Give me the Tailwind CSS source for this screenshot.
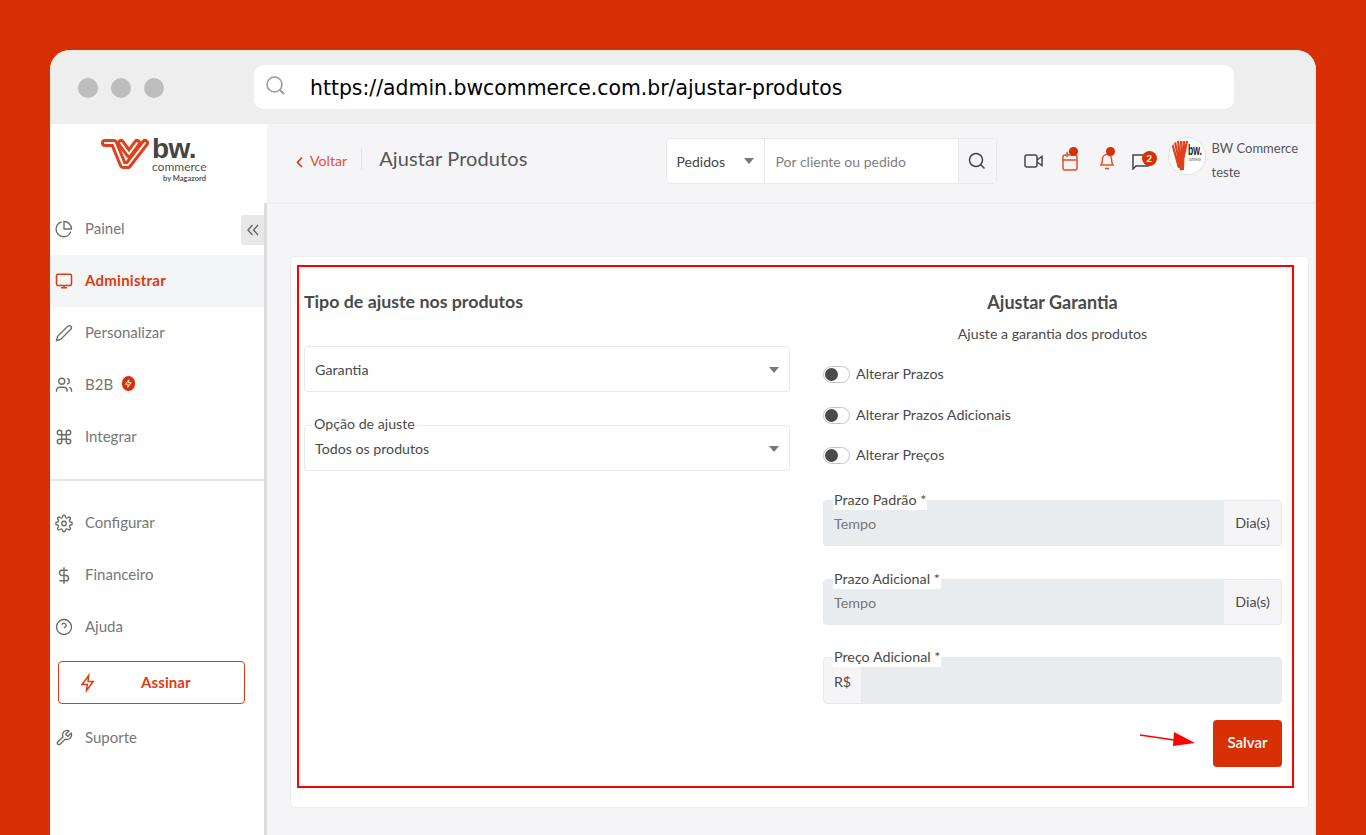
<!DOCTYPE html>
<html lang="pt-BR"><head><meta charset="utf-8"><script src="https://cdn.jsdelivr.net/npm/@tailwindcss/browser@4"></script><title>Ajustar Produtos</title></head>
<body class="m-0 h-[835px] w-[1366px] overflow-hidden bg-[#d82f05] pt-[50px] px-[50px] font-['Lato',sans-serif] text-[15px] text-[#4a4a4a]">
<div class="h-[785px] w-[1266px] overflow-hidden rounded-t-[20px] bg-white">
  <!-- browser bar -->
  <div class="flex h-[74px] items-center bg-[#eeeeee] pl-[28px]">
    <div class="flex gap-[13px] pt-[1px]"><span class="size-[20px] rounded-full bg-[#bdbdbd]"></span><span class="size-[20px] rounded-full bg-[#bdbdbd]"></span><span class="size-[20px] rounded-full bg-[#bdbdbd]"></span></div>
    <div class="ml-[90px] flex h-[44px] w-[980px] items-center rounded-[10px] bg-white pl-[11px]">
      <svg width="22" height="22" viewBox="0 0 22 22" fill="none" stroke="#9a9a9a" class="-mt-[3px]"><circle cx="9.500" cy="9.500" r="7.500" stroke-width="1.600"/><path d="M15 15l4 4" stroke-width="2"/></svg>
      <span class="ml-[23px] pt-[3px] font-['DejaVu_Sans',sans-serif] text-[20.400px] text-black">https://admin.bwcommerce.com.br/ajustar-produtos</span>
    </div>
  </div>
  <div class="flex h-[711px]">
    <!-- sidebar -->
    <aside class="relative w-[217px] shrink-0 bg-white">
      <div class="flex h-[79px] items-start pl-[50px] pt-[13px]">
        <svg width="50" height="36" viewBox="0 0 50 36" fill="none" stroke-linejoin="round" stroke-linecap="round"><g stroke="#e0401c" stroke-width="8"><path d="M5 6H14L23 28H28L45 6"/><path d="M21 6L29 17L37 6"/></g><g stroke="#fff" stroke-width="2"><path d="M5 6H14L23 28H28L45 6"/><path d="M21 6L29 17L37 6"/></g></svg>
        <div class="ml-[2px] flex w-[54px] flex-col leading-none">
          <span class="font-['Liberation_Sans',sans-serif] text-[28px] font-bold leading-[24px] tracking-[-.6px] text-[#444]">bw.</span>
          <span class="text-[12px] leading-[11px] text-[#555]">commerce</span>
          <span class="mt-[2px] self-end whitespace-nowrap text-[7.500px] leading-[9px] font-bold text-[#555]">by Magazord</span>
        </div>
      </div>
      <nav>
        <a class="flex h-[52px] items-center pl-[5px] text-[#777]"><svg class="w-[18px]" height="20" viewBox="0 0 24 24" fill="none" stroke="#6b6b6b" stroke-width="1.800"><path d="M21 15.500A10 10 0 1 1 9 2.600"/><path d="M22 12A10 10 0 0 0 12 2v10z"/></svg><span class="-mt-[2px] ml-[12px]">Painel</span></a>
        <a class="flex h-[52px] items-center bg-[#f4f5f7] pl-[5px] font-bold text-[#dd3c12]"><svg class="w-[18px]" height="20" viewBox="0 0 24 24" fill="none" stroke="#dd3c12" stroke-width="2"><rect x="2" y="3" width="20" height="15" rx="2"/><path d="M12 18v3M8 21h8"/></svg><span class="-mt-[2px] ml-[12px] tracking-[.25px]">Administrar</span></a>
        <a class="flex h-[52px] items-center pl-[5px] text-[#777]"><svg class="w-[18px]" height="20" viewBox="0 0 24 24" fill="none" stroke="#6b6b6b" stroke-width="1.800"><path d="M17 3a2.800 2.800 0 0 1 4 4L7.500 20.500 2 22l1.500-5.500z"/></svg><span class="-mt-[2px] ml-[12px]">Personalizar</span></a>
        <a class="flex h-[52px] items-center pl-[5px] text-[#777]"><svg class="w-[18px]" height="20" viewBox="0 0 24 24" fill="none" stroke="#6b6b6b" stroke-width="1.800"><path d="M16 21v-2a4 4 0 0 0-4-4H6a4 4 0 0 0-4 4v2"/><circle cx="9" cy="7" r="4"/><path d="M22 21v-2a4 4 0 0 0-3-3.900M16 3.100a4 4 0 0 1 0 7.800"/></svg><span class="-mt-[2px] ml-[12px]">B2B</span><span class="relative -top-[2px] ml-[9px] flex h-[15px] w-[13px] items-center justify-center rounded-full bg-[#d82f05]"><svg width="9" height="9" viewBox="0 0 24 24" fill="none" stroke="#fff" stroke-width="2.500"><path d="M13 2L4 14h7l-1 8 9-12h-7z"/></svg></span></a>
        <a class="flex h-[52px] items-center pl-[5px] text-[#777]"><svg class="w-[18px]" height="20" viewBox="0 0 24 24" fill="none" stroke="#6b6b6b" stroke-width="1.800"><path d="M18 3a3 3 0 0 0-3 3v12a3 3 0 1 0 3-3H6a3 3 0 1 0 3 3V6a3 3 0 1 0-3 3h12a3 3 0 0 0 0-6"/></svg><span class="-mt-[2px] ml-[12px]">Integrar</span></a>
      </nav>
      <div class="mt-[16px] h-[2px] w-[214px] bg-[#e6e6e6]"></div>
      <nav class="mt-[16px]">
        <a class="flex h-[52px] items-center pl-[5px] text-[#777]"><svg class="w-[18px]" height="21" viewBox="0 0 24 24" fill="none" stroke="#6b6b6b" stroke-width="1.800"><circle cx="12" cy="12" r="3"/><path d="M19.400 15a1.700 1.700 0 0 0 .3 1.800l.1.1a2 2 0 1 1-2.800 2.800l-.1-.1a1.700 1.700 0 0 0-2.900 1.200V21a2 2 0 0 1-4 0v-.1a1.700 1.700 0 0 0-2.900-1.200l-.1.1a2 2 0 1 1-2.800-2.800l.1-.1a1.700 1.700 0 0 0-1.200-2.900H3a2 2 0 0 1 0-4h.1a1.700 1.700 0 0 0 1.200-2.900l-.1-.1a2 2 0 1 1 2.800-2.800l.1.1a1.700 1.700 0 0 0 2.900-1.200V3a2 2 0 0 1 4 0v.1a1.700 1.700 0 0 0 2.900 1.200l.1-.1a2 2 0 1 1 2.800 2.800l-.1.1a1.700 1.700 0 0 0 1.200 2.900h.1a2 2 0 0 1 0 4h-.1a1.700 1.700 0 0 0-1.500 1z"/></svg><span class="-mt-[2px] ml-[12px]">Configurar</span></a>
        <a class="flex h-[52px] items-center pl-[5px] text-[#777]"><svg class="w-[18px]" height="21" viewBox="0 0 24 24" fill="none" stroke="#6b6b6b" stroke-width="1.900"><path d="M12 1v22M17 5H9.500a3.500 3.500 0 0 0 0 7h5a3.500 3.500 0 0 1 0 7H6"/></svg><span class="-mt-[2px] ml-[12px]">Financeiro</span></a>
        <a class="flex h-[52px] items-center pl-[5px] text-[#777]"><svg class="w-[18px]" height="20" viewBox="0 0 24 24" fill="none" stroke="#6b6b6b" stroke-width="1.800"><circle cx="12" cy="12" r="10"/><path d="M9.100 9a3 3 0 0 1 5.800 1c0 2-3 3-3 3M12 17h.01"/></svg><span class="-mt-[2px] ml-[12px]">Ajuda</span></a>
      </nav>
      <a class="relative ml-[8px] mt-[8px] flex h-[43px] w-[187px] items-center rounded-[4px] border border-[#dd3c12] font-bold text-[#dd3c12]">
        <svg class="ml-[20px]" width="18" height="22" viewBox="0 0 24 24" fill="none" stroke="#dd3c12" stroke-width="2"><path d="M13 2L4 14h7l-1 8 9-12h-7z"/></svg>
        <span class="ml-[44px] tracking-[.1px]">Assinar</span>
      </a>
      <a class="mt-[8px] flex h-[52px] items-center pl-[5px] text-[#777]"><svg class="w-[18px]" height="20" viewBox="0 0 24 24" fill="none" stroke="#6b6b6b" stroke-width="1.800"><path d="M14.700 6.300a1 1 0 0 0 0 1.400l1.600 1.600a1 1 0 0 0 1.400 0l3.800-3.800a6 6 0 0 1-7.900 7.900l-6.900 6.900a2.100 2.100 0 0 1-3-3l6.900-6.900a6 6 0 0 1 7.900-7.900z"/></svg><span class="-mt-[2px] ml-[12px]">Suporte</span></a>
      <button class="absolute left-[191px] top-[91px] flex h-[30px] w-[23px] items-center justify-center rounded-l-[3px] bg-[#e8e8e8]"><svg width="14" height="14" viewBox="0 0 14 14" fill="none" stroke="#666" stroke-width="1.400"><path d="M6.500 2L2 7l4.500 5M12 2L7.500 7l4.500 5"/></svg></button>
      <div class="absolute left-[214px] top-[79px] h-[632px] w-[3px] bg-[#dedede]"></div>
    </aside>
    <!-- main -->
    <main class="flex-1 bg-[#f5f5f8]">
      <header class="flex h-[80px] items-start border-b-2 border-[#eeeff1] pl-[28px]">
        <div class="mt-[26px] flex h-[21px] items-center text-[#e2502c]"><svg width="9" height="12" viewBox="0 0 9 12" fill="none" stroke="#dd3c12" stroke-width="1.700" class="mt-[2px]"><path d="M7 1.500L2.500 6.500 7 11"/></svg><span class="ml-[6px] text-[14.200px]">Voltar</span></div>
        <span class="ml-[14px] mt-[24px] h-[22px] border-l border-[#e4e4e4]"></span>
        <h1 class="ml-[17px] mt-[19px] text-[20px] font-normal leading-[30px] tracking-[.1px] text-[#555]">Ajustar Produtos</h1>
        <div class="ml-[138px] mt-[14px] flex h-[46px] w-[331px] rounded-[4px] border border-[#e8e9ec] bg-white text-[14px]">
          <div class="flex w-[98px] items-center justify-between border-r border-[#e8e9ec] pl-[10px] pr-[10px] text-[#444]">Pedidos<i class="h-0 w-0 border-x-[5px] border-t-[6px] border-x-transparent border-t-[#777]"></i></div>
          <div class="flex flex-1 items-center pl-[11px] text-[#808080]">Por cliente ou pedido</div>
          <div class="flex w-[38px] items-center justify-center border-l border-[#e8e9ec] bg-[#f5f5f8]"><svg width="18" height="18" viewBox="0 0 18 18" fill="none" stroke="#444" stroke-width="1.500"><circle cx="8" cy="8" r="6.500"/><path d="M12.800 12.800L16.500 16.500"/></svg></div>
        </div>
        <div class="relative ml-[27px] mt-[28px] flex h-[18px] items-center">
          <svg width="19" height="16" viewBox="0 0 19 16" fill="none" stroke="#444" stroke-width="1.500"><rect x="1" y="2" width="12" height="12" rx="2"/><path d="M13 7l5-3.500v9L13 9"/></svg>
          <span class="relative ml-[18px]"><svg width="18" height="24" viewBox="0 0 18 24" fill="none" stroke="#e2502c" stroke-width="1.500" class="-mt-[2px]"><rect x="2" y="7" width="14" height="15" rx="2"/><path d="M2 12h14M6 4v5"/></svg><i class="absolute -top-[3px] left-[8px] size-[9px] rounded-full bg-[#d82f05]"></i></span>
          <span class="relative ml-[19px]"><svg width="18" height="24" viewBox="0 0 18 24" fill="none" stroke="#e2502c" stroke-width="1.500" class="-mt-[2px]"><path d="M3 17c1.500-2 1.500-4 1.500-6a4.500 4.500 0 0 1 9 0c0 2 0 4 1.500 6zM7 20.500h4"/></svg><i class="absolute -top-[3px] left-[8px] size-[9px] rounded-full bg-[#d82f05]"></i></span>
          <span class="relative ml-[16px]"><svg width="17" height="17" viewBox="0 0 17 17" fill="none" stroke="#444" stroke-width="1.500"><path d="M1 2h15v11H4l-3 3z"/></svg><i class="absolute -top-[2px] left-[10px] flex size-[15px] items-center justify-center rounded-full bg-[#d82f05] text-[10px] not-italic font-bold text-white">2</i></span>
        </div>
        <div class="ml-[19px] mt-[13px] size-[38px] overflow-hidden rounded-full border border-[#e4e4e4] bg-white">
          <svg width="36" height="36" viewBox="0 0 36 36" fill="none">
            <g stroke="#e0401c" stroke-width="2.200"><path d="M3 5L10 30M6 4L12 32M9 3L13 32M12 3L14 32M15 3L14 30M18 3L12 32"/></g>
            <text x="19" y="17" font-family="Liberation Sans" font-size="15" font-weight="700" fill="#222" textLength="14" lengthAdjust="spacingAndGlyphs">bw.</text>
            <text x="20" y="23" font-family="Liberation Sans" font-size="4.500" fill="#444" textLength="12" lengthAdjust="spacingAndGlyphs">commerce</text>
          </svg>
        </div>
        <div class="ml-[6px] mt-[12px] text-[13px] leading-[24px] text-[#555]"><div class="whitespace-nowrap">BW Commerce</div><div>teste</div></div>
      </header>
      <div class="ml-[23px] mt-[52px] h-[552px] w-[1019px] rounded-[4px] border border-[#ebecef] bg-white px-[6px] pt-[8px]">
        <div class="flex h-[523px] w-[997px] border-2 border-[#ff0000] pl-[5px]">
          <section class="w-[486px]">
            <h2 class="mt-[20px] text-[17.800px] font-bold leading-[28px] text-[#4a4a4a]">Tipo de ajuste nos produtos</h2>
            <div class="mt-[31px] flex h-[46px] items-center justify-between rounded-[4px] border border-[#e8e9ec] pl-[10px] pr-[10px] pt-[1px] text-[14.300px]">Garantia<i class="h-0 w-0 border-x-[5px] border-t-[6px] border-x-transparent border-t-[#777]"></i></div>
            <div class="relative mt-[33px] flex h-[46px] items-center justify-between rounded-[4px] border border-[#e8e9ec] pl-[10px] pr-[10px] pt-[1px] text-[14.200px]">Todos os produtos<i class="h-0 w-0 border-x-[5px] border-t-[6px] border-x-transparent border-t-[#777]"></i>
              <label class="absolute -top-[11px] left-[7px] bg-white px-[2px] text-[14.200px] leading-[17px]">Opção de ajuste</label></div>
          </section>
          <section class="ml-[33px] w-[459px]">
            <h2 class="mt-[21px] text-center text-[18px] font-bold leading-[28px] text-[#4a4a4a]">Ajustar Garantia</h2>
            <p class="mt-[8px] text-center text-[14.200px] leading-[20px]">Ajuste a garantia dos produtos</p>
            <label class="mt-[20px] flex h-[20px] items-center gap-[6px] text-[14.300px]"><span class="flex h-[17px] w-[27px] items-center rounded-full border border-[#c4c4c4] pl-[1px]"><i class="size-[13px] rounded-full bg-[#4a4a4a]"></i></span>Alterar Prazos</label>
            <label class="mt-[21px] flex h-[20px] items-center gap-[6px] text-[14.300px]"><span class="flex h-[17px] w-[27px] items-center rounded-full border border-[#c4c4c4] pl-[1px]"><i class="size-[13px] rounded-full bg-[#4a4a4a]"></i></span>Alterar Prazos Adicionais</label>
            <label class="mt-[20px] flex h-[20px] items-center gap-[6px] text-[14.300px]"><span class="flex h-[17px] w-[27px] items-center rounded-full border border-[#c4c4c4] pl-[1px]"><i class="size-[13px] rounded-full bg-[#4a4a4a]"></i></span>Alterar Preços</label>
            <div class="relative mt-[35px] flex h-[46px] rounded-[4px] border border-[#e8e9ec] bg-[#e9ecef] text-[14.300px]">
              <div class="flex flex-1 items-center pl-[10px] pt-[2px] text-[#777]">Tempo</div><div class="flex w-[57px] items-center justify-center rounded-r-[4px] bg-[#f5f5f8]">Dia(s)</div>
              <label class="absolute -top-[12px] left-[9px] bg-white px-[1px] text-[14.300px] leading-[21px]">Prazo Padrão *</label>
            </div>
            <div class="relative mt-[33px] flex h-[46px] rounded-[4px] border border-[#e8e9ec] bg-[#e9ecef] text-[14.300px]">
              <div class="flex flex-1 items-center pl-[10px] pt-[2px] text-[#777]">Tempo</div><div class="flex w-[57px] items-center justify-center rounded-r-[4px] bg-[#f5f5f8]">Dia(s)</div>
              <label class="absolute -top-[12px] left-[9px] bg-white px-[1px] text-[14.300px] leading-[21px]">Prazo Adicional *</label>
            </div>
            <div class="relative mt-[32px] flex h-[47px] rounded-[4px] border border-[#e8e9ec] bg-[#e9ecef] text-[14.300px]">
              <div class="flex w-[37px] items-center justify-center rounded-l-[4px] bg-[#f5f5f8] pt-[2px]">R$</div><div class="flex-1"></div>
              <label class="absolute -top-[12px] left-[9px] bg-white px-[1px] text-[14.300px] leading-[21px]">Preço Adicional *</label>
            </div>
            <div class="relative mt-[16px] flex justify-end">
              <svg class="absolute left-[316px] top-[10px]" width="58" height="20" viewBox="0 0 58 20"><path d="M1 5L42 11" stroke="#ff0000" stroke-width="1.500"/><path d="M35 2L56 13 34 16z" fill="#ff0000"/></svg>
              <button class="h-[47px] w-[69px] rounded-[4px] bg-[#d82f05] pb-[2px] text-[15px] font-semibold text-white">Salvar</button>
            </div>
          </section>
        </div>
      </div>
    </main>
  </div>
</div>
</body></html>
